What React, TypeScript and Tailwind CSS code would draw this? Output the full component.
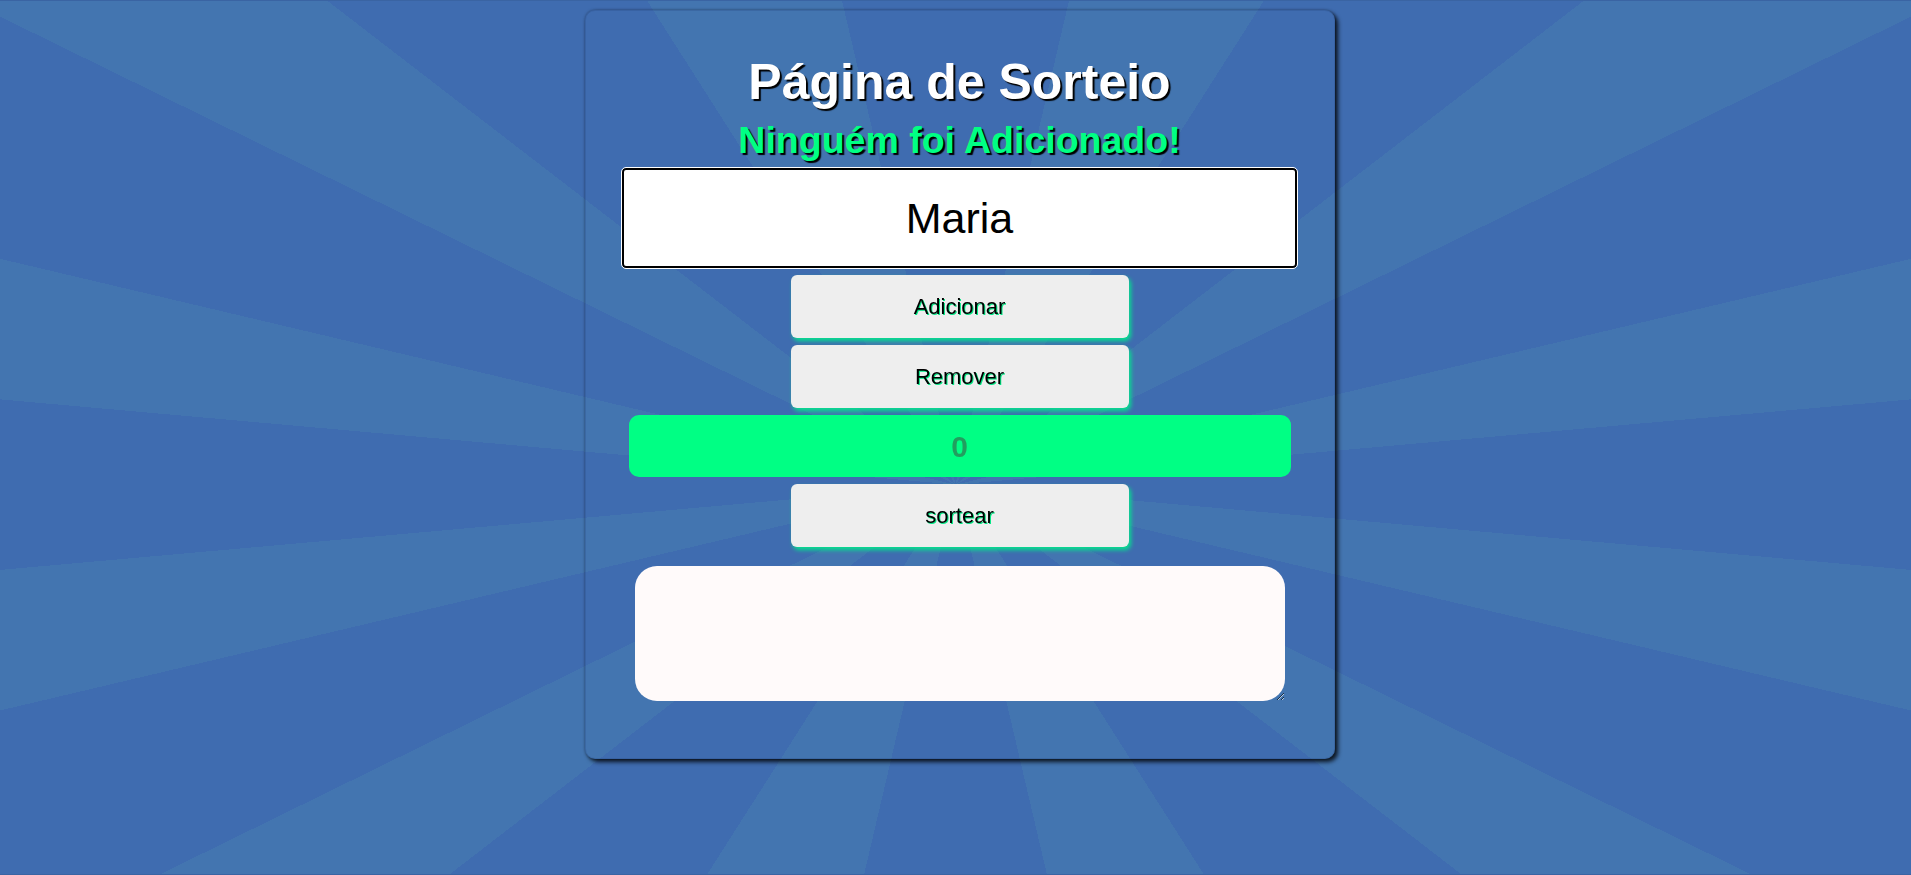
import { useState } from 'react';

/**
 * Página de Sorteio
 * Sunburst background with a centered card: name input, actions, counter and result box
 */

const actions = ['Adicionar', 'Remover'];

function ActionButton({ label }: { label: string }) {
  return (
    <button
      type="button"
      className="w-[338px] h-[63px] rounded-[6px] bg-[#eeeeee] text-[22px] text-black [text-shadow:1px_1px_0_#00e884] shadow-[2px_3px_4px_rgba(0,232,140,0.95)]"
    >
      {label}
    </button>
  );
}

export default function App() {
  const [name, setName] = useState('Maria');

  return (
    <div className="h-screen w-full overflow-hidden border-y border-[#3a64a3] bg-[#3f6cb0] bg-[image:conic-gradient(at_50%_55.4%,#3f6cb0_0deg_13.2deg,#4375b0_13.2deg_32.5deg,#3f6cb0_32.5deg_52.4deg,#4375b0_52.4deg_63.9deg,#3f6cb0_63.9deg_76.7deg,#4375b0_76.7deg_84.9deg,#3f6cb0_84.9deg_95.1deg,#4375b0_95.1deg_103.3deg,#3f6cb0_103.3deg_116.1deg,#4375b0_116.1deg_127.6deg,#3f6cb0_127.6deg_147.5deg,#4375b0_147.5deg_166.8deg,#3f6cb0_166.8deg_193.2deg,#4375b0_193.2deg_212.5deg,#3f6cb0_212.5deg_232.4deg,#4375b0_232.4deg_243.9deg,#3f6cb0_243.9deg_256.7deg,#4375b0_256.7deg_264.9deg,#3f6cb0_264.9deg_275.1deg,#4375b0_275.1deg_283.3deg,#3f6cb0_283.3deg_296.1deg,#4375b0_296.1deg_307.6deg,#3f6cb0_307.6deg_327.5deg,#4375b0_327.5deg_346.8deg,#3f6cb0_346.8deg_360deg)] font-['Liberation_Sans',Arial,sans-serif]">
      <div className="flex justify-center pl-[8px] pt-[9px]">
        {/* Card */}
        <div className="w-[750px] flex flex-col items-center rounded-[10px] border border-[#2f5690]/40 pt-[44px] pb-[57px] shadow-[3px_3px_4px_rgba(0,0,0,0.8),0_0_3px_rgba(0,0,0,0.35)]">
          <h1 className="text-[50px] leading-[55px] font-bold text-white [text-shadow:2px_2px_1px_#000]">
            Página de Sorteio
          </h1>
          <h2 className="mt-[9px] text-[37.5px] leading-[43px] font-bold text-[#00ff84] [text-shadow:2px_2px_1px_#000]">
            Ninguém foi Adicionado!
          </h2>

          {/* Name input */}
          <input
            autoFocus
            value={name}
            onChange={(e) => setName(e.target.value)}
            className="mt-[6px] w-[675px] h-[100px] rounded-[4px] border-2 border-black bg-white text-center text-[43px] text-black outline outline-1 outline-white caret-black"
          />

          <div className="mt-[7px] flex flex-col items-center gap-[7px]">
            {actions.map((label) => (
              <ActionButton key={label} label={label} />
            ))}
          </div>

          {/* Counter */}
          <div className="mt-[7px] w-[662px] h-[62px] rounded-[10px] bg-[#00ff84] flex items-center justify-center text-[30px] font-bold text-[#229e5f]">
            0
          </div>

          <div className="mt-[7px]">
            <ActionButton label="sortear" />
          </div>

          {/* Result */}
          <textarea className="mt-[19px] w-[650px] h-[135px] rounded-[22px] bg-[#fffafa] outline-none" />
        </div>
      </div>
    </div>
  );
}
